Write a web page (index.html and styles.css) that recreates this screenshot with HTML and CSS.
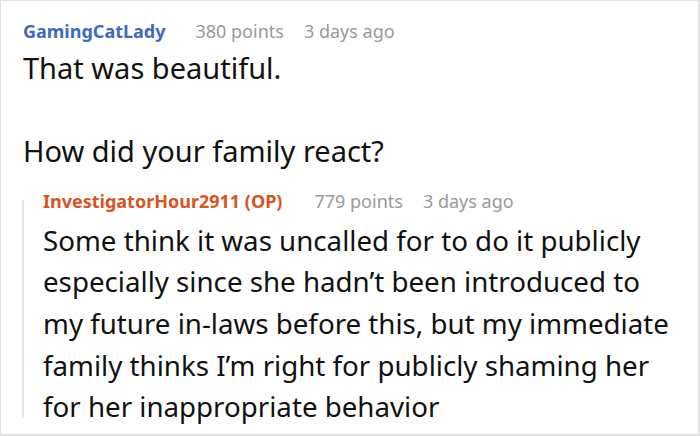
FILE: index.html
```html
<!DOCTYPE html>
<html lang="en">
<head>
<meta charset="utf-8">
<title>Comments</title>
<link rel="stylesheet" href="styles.css">
</head>
<body>
<div class="frame">
  <div class="comment">
    <div class="meta">
      <span class="author">GamingCatLady</span>
      <span class="stat">380 points</span>
      <span class="stat">3 days ago</span>
    </div>
    <div class="body top-body">That was beautiful.<br><br>How did your family react?</div>
    <div class="reply">
      <div class="rail"></div>
      <div class="reply-content">
        <div class="meta">
          <span class="author op">InvestigatorHour2911 (OP)</span>
          <span class="stat">779 points</span>
          <span class="stat">3 days ago</span>
        </div>
        <div class="body reply-body">Some think it was uncalled for to do it publicly<br>especially since she hadn’t been introduced to<br>my future in-laws before this, but my immediate<br>family thinks I’m right for publicly shaming her<br>for her inappropriate behavior</div>
      </div>
    </div>
  </div>
</div>
</body>
</html>
```

FILE: styles.css
```css
* { box-sizing: border-box; }
html, body { margin: 0; padding: 0; background: #fff; }
body { font-family: "Noto Sans", "Open Sans", sans-serif; color: #111; }
.frame {
  width: 700px;
  height: 436px;
  border: 1px solid #e2e2e2;
  border-right-width: 2px;
  border-bottom-width: 2px;
  overflow: hidden;
  background: #fff;
}
.comment {
  padding: 17px 0 0 22px;
}
.meta {
  display: flex;
  gap: 20px;
  font-size: 18px;
  line-height: 26px;
  white-space: nowrap;
}
.author { font-weight: 700; color: #3b6cbf; margin-right: 10px; }
.author.op { color: #d9531e; margin-right: 12px; }
.stat { color: #999; }
.body {
  font-size: 29px;
  line-height: 41.6px;
}
.top-body { margin-top: 3px; }
.reply {
  display: flex;
  margin-top: 16px;
  margin-left: -1px;
}
.rail {
  width: 2px;
  flex: none;
  background: #e6e6e6;
  margin: 12px 0 10px;
}
.reply-content {
  padding-left: 19px;
  flex: 1;
}
.reply-body { margin-top: 6px; font-size: 27.7px; white-space: nowrap; }
```
